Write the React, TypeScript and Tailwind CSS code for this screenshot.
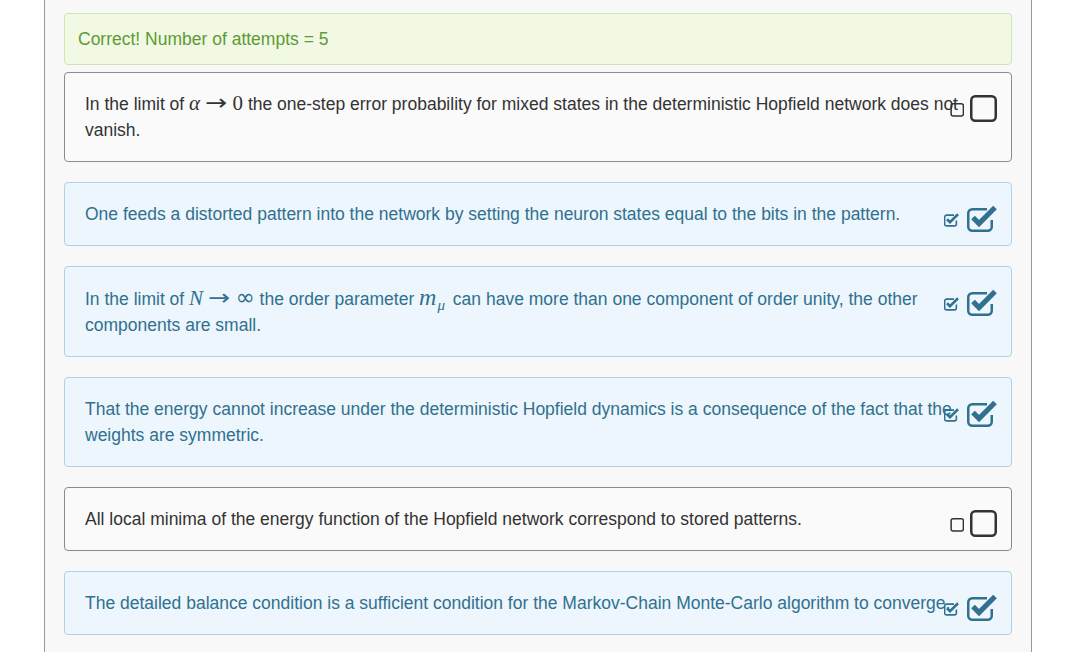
import React from 'react';

type Kind = 'info' | 'plain';

const sans = { fontFamily: '"Liberation Sans", Arial, sans-serif' };

function Mi({ children }: { children: React.ReactNode }) {
  return <span className="italic text-[21px] leading-none [font-family:'Liberation_Serif',serif]">{children}</span>;
}

function Mr({ children }: { children: React.ReactNode }) {
  return <span className="text-[21px] leading-none [font-family:'Liberation_Serif',serif]">{children}</span>;
}

function Arrow() {
  return (
    <span className="mx-[7px] inline-block scale-x-[1.2] text-[22px] leading-none [font-family:'DejaVu_Sans',sans-serif]">
      →
    </span>
  );
}

function BoxIcon({ checked, small }: { checked: boolean; small?: boolean }) {
  const s = small ? 15 : 30;
  const color = checked ? '#31708f' : '#333333';
  return (
    <svg width={s} height={s} viewBox="0 0 30 30" fill="none" stroke={color}>
      {checked ? (
        <>
          <path
            d="M20 6.25 H5.25 A4 4 0 0 0 1.25 10.25 V23.75 A4 4 0 0 0 5.25 27.75 H20.75 A4 4 0 0 0 24.75 23.75 V17"
            strokeWidth={small ? 3.2 : 2.5}
          />
          <path d="M6 14.5 L12 20.5 L28 4.5" strokeWidth={small ? 5 : 5.2} />
        </>
      ) : (
        <rect x="4.25" y="3.25" width="24.5" height="24.5" rx="4" strokeWidth={small ? 3 : 2.5} />
      )}
    </svg>
  );
}

function Card({ kind, checked, children }: { kind: Kind; checked: boolean; children: React.ReactNode }) {
  const look =
    kind === 'info'
      ? 'bg-[#ecf6fc] border-[#b1d2e6] text-[#31708f]'
      : 'bg-[#fafafa] border-[#8c8c8c] text-[#333333]';
  return (
    <div className={`relative mb-[20px] rounded-[4px] border px-[20px] py-[18px] leading-[26px] ${look}`}>
      <div>{children}</div>
      <div className={`absolute right-[14px] top-[20px] flex items-start ${checked ? 'gap-[8px]' : 'gap-[3px]'}`}>
        <div className="mt-[9px]">
          <BoxIcon checked={checked} small />
        </div>
        <BoxIcon checked={checked} />
      </div>
    </div>
  );
}

export default function App() {
  return (
    <div className="min-h-screen bg-white text-[17.5px]" style={sans}>
      <div className="ml-[44px] min-h-[652px] w-[988px] border-x border-[#9a9a9a] bg-[#f8f8f8] px-[19px] pt-[13px]">
        <div className="mb-[7px] rounded-[4px] border border-[#cfe6b3] bg-[#f1f9e4] px-[13px] py-[15px] leading-[20px] text-[#5f9a33]">
          Correct! Number of attempts = 5
        </div>

        <Card kind="plain" checked={false}>
          In the limit of <Mi>α</Mi>
          <Arrow />
          <Mr>0</Mr> the one-step error probability for mixed states in the deterministic Hopfield network does not
          vanish.
        </Card>

        <Card kind="info" checked>
          One feeds a distorted pattern into the network by setting the neuron states equal to the bits in the pattern.
        </Card>

        <Card kind="info" checked>
          In the limit of <Mi>N</Mi>
          <Arrow />
          <span className="text-[23px] leading-none [font-family:'DejaVu_Sans',sans-serif]">∞</span> the order
          parameter{' '}
          <span className="italic text-[24px] leading-none [font-family:'Liberation_Serif',serif]">m</span>
          <span className="relative top-[5px] ml-[1px] mr-[3px] italic text-[15px] leading-none [font-family:'Liberation_Serif',serif]">
            μ
          </span>{' '}
          can have more than one component of order unity, the other components are small.
        </Card>

        <Card kind="info" checked>
          That the energy cannot increase under the deterministic Hopfield dynamics is a consequence of the fact that the
          weights are symmetric.
        </Card>

        <Card kind="plain" checked={false}>
          All local minima of the energy function of the Hopfield network correspond to stored patterns.
        </Card>

        <Card kind="info" checked>
          The detailed balance condition is a sufficient condition for the Markov-Chain Monte-Carlo algorithm to
          converge.
        </Card>
      </div>
    </div>
  );
}
